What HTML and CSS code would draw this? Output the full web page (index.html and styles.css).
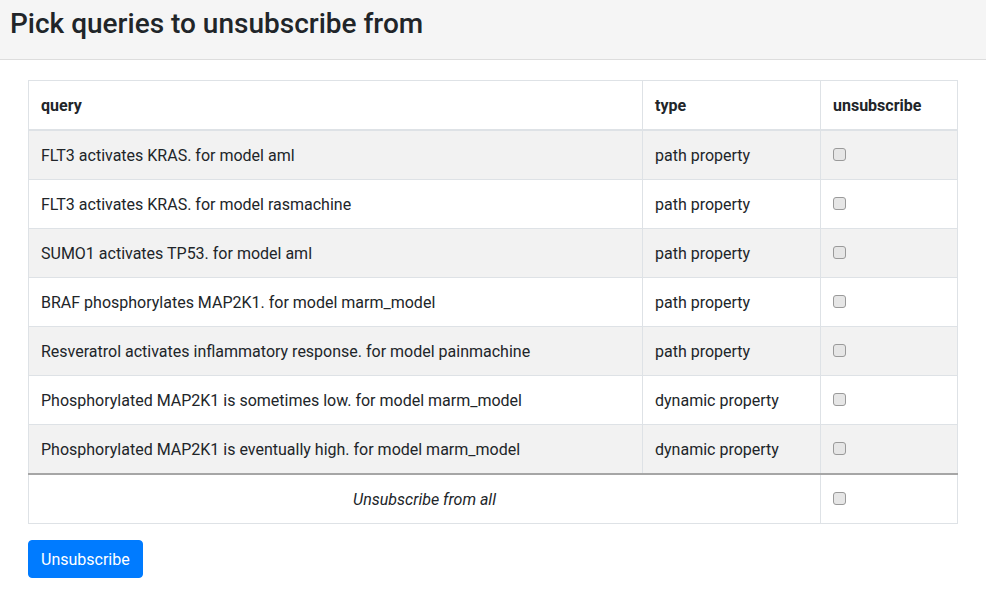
FILE: index.html
```html
<!DOCTYPE html>
<html>
<head>
<meta charset="utf-8">
<link rel="stylesheet" href="styles.css">
</head>
<body>
<header class="page-header">
  <h1 class="title">Pick queries to unsubscribe from</h1>
</header>
<main class="content">
  <table class="queries">
    <thead>
      <tr><th class="col-query">query</th><th class="col-type">type</th><th class="col-unsub">unsubscribe</th></tr>
    </thead>
    <tbody>
      <tr><td>FLT3 activates KRAS. for model aml</td><td>path property</td><td><input type="checkbox" class="check"></td></tr>
      <tr><td>FLT3 activates KRAS. for model rasmachine</td><td>path property</td><td><input type="checkbox" class="check"></td></tr>
      <tr><td>SUMO1 activates TP53. for model aml</td><td>path property</td><td><input type="checkbox" class="check"></td></tr>
      <tr><td>BRAF phosphorylates MAP2K1. for model marm_model</td><td>path property</td><td><input type="checkbox" class="check"></td></tr>
      <tr><td>Resveratrol activates inflammatory response. for model painmachine</td><td>path property</td><td><input type="checkbox" class="check"></td></tr>
      <tr><td>Phosphorylated MAP2K1 is sometimes low. for model marm_model</td><td>dynamic property</td><td><input type="checkbox" class="check"></td></tr>
      <tr><td>Phosphorylated MAP2K1 is eventually high. for model marm_model</td><td>dynamic property</td><td><input type="checkbox" class="check"></td></tr>
      <tr class="all-row"><td colspan="2" class="all-label">Unsubscribe from all</td><td><input type="checkbox" class="check"></td></tr>
    </tbody>
  </table>
  <button class="btn-primary" type="button">Unsubscribe</button>
</main>
</body>
</html>
```
FILE: styles.css
```css
* { box-sizing: border-box; }
body {
  margin: 0;
  font-family: Roboto, "Liberation Sans", sans-serif;
  font-size: 16px;
  line-height: 1.5;
  color: #212529;
  background: #fff;
}
.page-header {
  background: #f5f5f5;
  border-bottom: 1px solid #dddddd;
  padding: 7px 10px 18px;
}
.title {
  margin: 0;
  font-size: 28px;
  font-weight: 500;
  line-height: 1.2;
}
.content {
  padding: 20px 28px;
}
.queries {
  width: 930px;
  border-collapse: collapse;
  border: 1px solid #dee2e6;
  margin-bottom: 16px;
}
.queries th, .queries td {
  border: 1px solid #dee2e6;
  padding: 13px 12px 11px;
  text-align: left;
  vertical-align: top;
}
.queries th {
  font-weight: 700;
  border-bottom: 2px solid #dee2e6;
}
.col-query { width: 614px; }
.col-type { width: 178px; }
.queries tbody tr:nth-child(odd) { background: #f2f2f2; }
.queries tbody tr.all-row { background: #fff; }
.queries tr.all-row td { border-top: 2px solid #a6a6a6; }
.all-label { text-align: center !important; font-style: italic; }
.check {
  appearance: none;
  -webkit-appearance: none;
  display: inline-block;
  margin: 4px 0 0 0;
  width: 13px;
  height: 13px;
  border: 1px solid #9a9a9a;
  border-radius: 3px;
  background: #e6e6e6;
  vertical-align: top;
}
.btn-primary {
  display: inline-block;
  font-family: inherit;
  font-size: 16px;
  line-height: 1.5;
  color: #fff;
  background: #007bff;
  border: 1px solid #007bff;
  border-radius: 4px;
  padding: 7px 12px 5px;
}
```
